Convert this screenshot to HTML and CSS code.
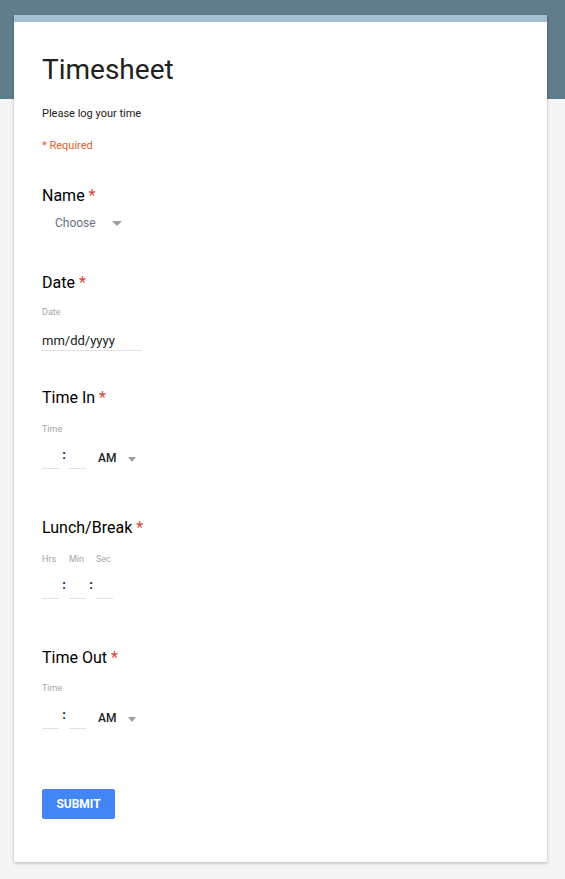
FILE: index.html
```html
<!DOCTYPE html>
<html>
<head>
<meta charset="utf-8">
<link rel="stylesheet" href="styles.css">
</head>
<body>
<div class="page">
  <form class="card">
    <h1 class="title">Timesheet</h1>
    <p class="desc">Please log your time</p>
    <p class="required">* Required</p>

    <div class="q q-name">
      <div class="q-title">Name <span class="star">*</span></div>
      <div class="select">
        <span class="choose">Choose</span>
        <span class="arrow"></span>
      </div>
    </div>

    <div class="q q-date">
      <div class="q-title">Date <span class="star">*</span></div>
      <div class="sub">Date</div>
      <div class="date-input">mm/dd/yyyy</div>
    </div>

    <div class="q q-time q-in">
      <div class="q-title">Time In <span class="star">*</span></div>
      <div class="sub">Time</div>
      <div class="time-row">
        <span class="field"></span>
        <span class="colon">:</span>
        <span class="field"></span>
        <span class="ampm">AM</span>
        <span class="arrow"></span>
      </div>
    </div>

    <div class="q q-dur">
      <div class="q-title">Lunch/Break <span class="star">*</span></div>
      <div class="sub dur-labels"><span>Hrs</span><span>Min</span><span>Sec</span></div>
      <div class="time-row">
        <span class="field"></span>
        <span class="colon">:</span>
        <span class="field"></span>
        <span class="colon">:</span>
        <span class="field"></span>
      </div>
    </div>

    <div class="q q-time q-out">
      <div class="q-title">Time Out <span class="star">*</span></div>
      <div class="sub">Time</div>
      <div class="time-row">
        <span class="field"></span>
        <span class="colon">:</span>
        <span class="field"></span>
        <span class="ampm">AM</span>
        <span class="arrow"></span>
      </div>
    </div>

    <div class="actions">
      <button type="button" class="submit">SUBMIT</button>
    </div>
  </form>
</div>
</body>
</html>
```

FILE: styles.css
```css
html, body {
  margin: 0;
  padding: 0;
}
body {
  font-family: Roboto, "Liberation Sans", Arial, sans-serif;
  color: #212121;
  background: #f5f5f5;
}
.page {
  min-height: 879px;
  background: linear-gradient(#607d8b 0, #607d8b 99px, #f5f5f5 99px);
  padding: 15px 18px 16px 14px;
  box-sizing: border-box;
}
.card {
  width: 533px;
  box-sizing: border-box;
  background: #fff;
  border-top: 7px solid #a3bfd1;
  box-shadow: 0 1px 3px rgba(0,0,0,0.28);
  padding: 30px 28px 43px 28px;
  display: flex;
  flex-direction: column;
}
.title {
  margin: 0;
  font-size: 28px;
  line-height: 36px;
  font-weight: 400;
  color: #212121;
}
.desc {
  margin: 18px 0 0;
  font-size: 11px;
  line-height: 16px;
  color: #212121;
}
.required {
  margin: 16px 0 0;
  font-size: 11px;
  line-height: 16px;
  color: #dd5b2c;
}
.q-title {
  font-size: 16px;
  line-height: 24px;
  color: #000;
}
.star {
  color: #db4437;
}
.q-name { margin-top: 30px; }
.q-date { margin-top: 38px; }
.q-in { margin-top: 35px; }
.q-dur { margin-top: 47px; }
.q-out { margin-top: 47px; }

.select {
  margin-top: 5px;
  height: 20px;
  display: flex;
  align-items: center;
  padding-left: 13px;
}
.choose {
  font-size: 12px;
  color: #6b7280;
  width: 57px;
}
.arrow {
  width: 0;
  height: 0;
  border-left: 5px solid transparent;
  border-right: 5px solid transparent;
  border-top: 5px solid #9e9e9e;
}
.sub {
  margin-top: 11px;
  font-size: 9px;
  line-height: 12px;
  color: #a6a6a6;
}
.date-input {
  margin-top: 14px;
  width: 100px;
  font-size: 13px;
  line-height: 18px;
  color: #212121;
  border-bottom: 1px solid #e0e0e0;
}
.q-in .sub, .q-dur .sub { margin-top: 13px; }
.q-out .sub { margin-top: 12px; }
.dur-labels {
  display: flex;
}
.dur-labels span:nth-child(1) { width: 27px; }
.dur-labels span:nth-child(2) { width: 27px; }
.time-row {
  margin-top: 13px;
  height: 21px;
  display: flex;
  align-items: flex-start;
}
.q-out .time-row { margin-top: 14px; }
.field {
  width: 17px;
  height: 20px;
  border-bottom: 1px solid #e0e0e0;
}
.colon {
  width: 10px;
  text-align: center;
  font-size: 13px;
  font-weight: 700;
  line-height: 14px;
  height: 20px;
  color: #212121;
}
.ampm {
  margin-left: 12px;
  width: 30px;
  font-size: 12px;
  font-weight: 500;
  line-height: 20px;
  color: #212121;
}
.time-row .arrow {
  margin-top: 9px;
  border-left-width: 4.5px;
  border-right-width: 4.5px;
}
.actions {
  margin-top: 60px;
}
.submit {
  width: 73px;
  height: 30px;
  border: 0;
  border-radius: 2px;
  background: #4285f4;
  color: #fff;
  font-family: Roboto, "Liberation Sans", Arial, sans-serif;
  font-size: 12px;
  font-weight: 700;
  padding: 0;
}
```
